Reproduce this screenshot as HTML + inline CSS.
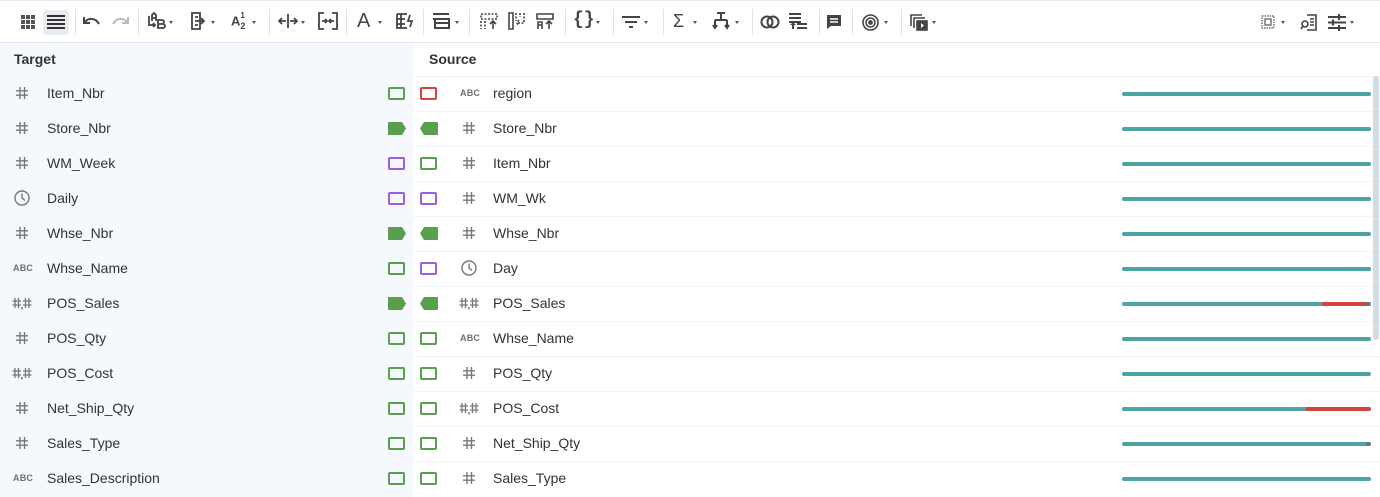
<!DOCTYPE html>
<html><head><meta charset="utf-8"><style>
*{margin:0;padding:0;box-sizing:border-box}
body{width:1380px;height:497px;overflow:hidden;background:#fff;font-family:"Liberation Sans",Arial,sans-serif;color:#333;position:relative}
.tb{position:absolute;left:0;top:0;width:1380px;height:43px;border-top:1px solid #e6eaf0;border-bottom:1px solid #e3e8ef;background:#fff}
.ic{position:absolute;top:11px}
.sep{position:absolute;top:8px;width:1px;height:26px;background:#dde2e8}
.dd{position:absolute;top:20px;width:0;height:0;border-left:2.5px solid transparent;border-right:2.5px solid transparent;border-top:3px solid #555}
.lp{position:absolute;left:0;top:43px;width:413px;height:454px;background:#f5f8fc}
.hdr{position:absolute;top:51px;font-size:14px;font-weight:bold;color:#333}
.row{position:absolute;left:413px;width:967px;height:35px;border-top:1px solid #f0f3f7}
.t{position:absolute;font-size:14px;color:#333;line-height:16px}
.ty{position:absolute}
.abc{position:absolute;font-size:9px;font-weight:bold;color:#6b6f76;letter-spacing:0.2px;line-height:10px}
.box{position:absolute;width:17px;height:13px;border:2px solid #5a9e4f;border-radius:2px}
.bar{position:absolute;left:1122px;width:249px;height:4px;border-radius:2px;background:#4ea3a5;overflow:hidden}
.bar i{position:absolute;top:0;height:4px}
</style></head><body>
<div class="tb">
<svg class="ic" style="left:20px;top:13px" width="16" height="16" viewBox="0 0 16 16" fill="#555"><rect x="1" y="1" width="4" height="4"/><rect x="6" y="1" width="4" height="4"/><rect x="11" y="1" width="4" height="4"/><rect x="1" y="6" width="4" height="4"/><rect x="6" y="6" width="4" height="4"/><rect x="11" y="6" width="4" height="4"/><rect x="1" y="11" width="4" height="4"/><rect x="6" y="11" width="4" height="4"/><rect x="11" y="11" width="4" height="4"/></svg>
<div style="position:absolute;left:43px;top:9px;width:26px;height:25px;background:#e8ecf1;border-radius:3px"></div>
<svg class="ic" style="left:47px;top:14px" width="18" height="14" viewBox="0 0 18 14" fill="#333"><rect y="0" width="18" height="2"/><rect y="4" width="18" height="2"/><rect y="8" width="18" height="2"/><rect y="12" width="18" height="2"/></svg>
<div class="sep" style="left:75px"></div>
<svg class="ic" style="left:83px;top:15px" width="18" height="12" viewBox="0 0 18 12" fill="none" stroke="#444" stroke-width="2"><path d="M2 6c3-4 10-5 14 2"/><path d="M1 1v6h6" stroke-width="2"/></svg>
<svg class="ic" style="left:111px;top:15px" width="18" height="12" viewBox="0 0 18 12" fill="none" stroke="#bbb" stroke-width="2"><path d="M16 6C13 2 6 1 2 8"/><path d="M17 1v6h-6"/></svg>
<div class="sep" style="left:138px"></div>
<svg class="ic" style="left:147px" width="20" height="18" viewBox="0 0 20 18" fill="none" stroke="#444" stroke-width="1.8"><path d="M2 4v9h6M6 11l2 2-2 2"/><path d="M5 9V3l2-2 2 2v6M5 6h4"/><path d="M11 8h4a2 2 0 010 4h-4zM11 12h5a2 2 0 010 4h-5z"/></svg>
<div class="dd" style="left:169px"></div>
<svg class="ic" style="left:190px" width="18" height="18" viewBox="0 0 18 18" fill="none" stroke="#444" stroke-width="1.8"><path d="M2 1h8v16H2zM5 5h3M5 9h9M11 6l3 3-3 3M5 13h3"/></svg>
<div class="dd" style="left:211px"></div>
<div class="ic" style="left:231px;top:12px;font-size:13px;font-weight:bold;color:#444">A<sub style="font-size:9px">2</sub><sup style="font-size:8px;position:relative;left:-5px;top:-2px">1</sup></div>
<div class="dd" style="left:252px"></div>
<div class="sep" style="left:269px"></div>
<svg class="ic" style="left:278px" width="20" height="18" viewBox="0 0 20 18" fill="none" stroke="#444" stroke-width="1.8"><path d="M10 2v14M1 9h7M12 9h7M4 6l-3 3 3 3M16 6l3 3-3 3"/></svg>
<div class="dd" style="left:301px"></div>
<svg class="ic" style="left:318px" width="20" height="18" viewBox="0 0 20 18" fill="none" stroke="#444" stroke-width="1.8"><path d="M6 1H1v16h5M14 1h5v16h-5M4 9h5M7 7l2 2-2 2M16 9h-5M13 7l-2 2 2 2"/></svg>
<div class="sep" style="left:346px"></div>
<div class="ic" style="left:357px;top:9px;font-size:20px;color:#444">A</div>
<div class="dd" style="left:378px"></div>
<svg class="ic" style="left:395px" width="20" height="18" viewBox="0 0 20 18" fill="none" stroke="#444" stroke-width="1.8"><path d="M2 2h10M2 2v14h10M2 7h8M2 12h8M6 2v14M15 3l-2 6h4l-2 6"/></svg>
<div class="sep" style="left:423px"></div>
<svg class="ic" style="left:432px" width="20" height="18" viewBox="0 0 20 18" fill="none" stroke="#444" stroke-width="2"><path d="M1 2h16M1 7h16v4H3M3 7v9h14v-5"/></svg>
<div class="dd" style="left:455px"></div>
<div class="sep" style="left:469px"></div>
<svg class="ic" style="left:480px" width="18" height="18" viewBox="0 0 18 18" fill="none" stroke="#444" stroke-width="1.6"><path d="M1 2h16v5H1zM1 9v8M5 9v8" stroke-dasharray="2 1.5"/><path d="M13 17V9M10 12l3-3 3 3"/></svg>
<svg class="ic" style="left:508px" width="18" height="18" viewBox="0 0 18 18" fill="none" stroke="#444" stroke-width="1.6"><path d="M1 1h4v16H1z"/><path d="M8 1v8M12 1v4M16 1v10h-7M11 8l-2 3 2 3" stroke-dasharray="2 1.5"/></svg>
<svg class="ic" style="left:536px" width="18" height="18" viewBox="0 0 18 18" fill="none" stroke="#444" stroke-width="1.6"><path d="M1 2h16v5H1zM2 17v-7h4v7M2 13h4M13 17V9M10 12l3-3 3 3"/></svg>
<div class="sep" style="left:565px"></div>
<div class="ic" style="left:573px;top:9px;font-size:18px;color:#444;font-family:'Liberation Mono',monospace;font-weight:bold">{}</div>
<div class="dd" style="left:596px"></div>
<div class="sep" style="left:613px"></div>
<svg class="ic" style="left:622px;top:15px" width="18" height="12" viewBox="0 0 18 12" fill="#444"><rect x="0" y="0" width="18" height="2"/><rect x="3" y="5" width="12" height="2"/><rect x="7" y="10" width="4" height="2"/></svg>
<div class="dd" style="left:644px"></div>
<div class="sep" style="left:663px"></div>
<div class="ic" style="left:673px;top:10px;font-size:18px;color:#444">Σ</div>
<div class="dd" style="left:693px"></div>
<svg class="ic" style="left:712px" width="18" height="18" viewBox="0 0 18 18" fill="none" stroke="#444" stroke-width="2"><path d="M5 1h8M9 1v7M3 8h12M3 8v8M15 8v8M1 13l2 3 2-3M13 13l2 3 2-3"/></svg>
<div class="dd" style="left:735px"></div>
<div class="sep" style="left:752px"></div>
<svg class="ic" style="left:760px;top:14px" width="20" height="14" viewBox="0 0 20 14" fill="none" stroke="#444" stroke-width="2"><circle cx="7" cy="7" r="5.5"/><circle cx="13" cy="7" r="5.5"/></svg>
<svg class="ic" style="left:789px" width="18" height="18" viewBox="0 0 18 18" fill="#444"><rect x="0" y="1" width="12" height="2"/><rect x="0" y="5" width="12" height="2"/><rect x="0" y="9" width="12" height="2"/><rect x="8" y="15" width="10" height="2"/><rect x="8" y="11" width="10" height="2"/><path d="M3 17v-4H1l3-3 3 3H5v4z"/></svg>
<div class="sep" style="left:819px"></div>
<svg class="ic" style="left:826px;top:13px" width="16" height="16" viewBox="0 0 16 16"><path d="M1 1h14v11H5l-4 3z" fill="#444"/><path d="M4 5h8M4 8h8" stroke="#fff" stroke-width="1.4"/></svg>
<div class="sep" style="left:852px"></div>
<svg class="ic" style="left:862px;top:13px" width="17" height="17" viewBox="0 0 17 17" fill="none" stroke="#444" stroke-width="1.6"><circle cx="8.5" cy="8.5" r="7.5"/><circle cx="8.5" cy="8.5" r="4.5"/><circle cx="8.5" cy="8.5" r="1.6" fill="#444"/></svg>
<div class="dd" style="left:884px"></div>
<div class="sep" style="left:901px"></div>
<svg class="ic" style="left:910px;top:13px" width="18" height="17" viewBox="0 0 18 17" fill="none" stroke="#444" stroke-width="1.6"><path d="M1 12V1h11M4 14V4h11"/><rect x="7" y="7" width="10" height="9" fill="#444"/><path d="M11 9l3 2.5-3 2.5z" fill="#fff" stroke="none"/></svg>
<div class="dd" style="left:932px"></div>
<svg class="ic" style="left:1261px;top:14px" width="14" height="14" viewBox="0 0 14 14" fill="none" stroke="#555" stroke-width="1.2"><rect x="1" y="1" width="12" height="12" stroke-dasharray="1.5 1"/><rect x="4" y="4" width="6" height="6"/></svg>
<div class="dd" style="left:1281px"></div>
<svg class="ic" style="left:1300px;top:13px" width="18" height="17" viewBox="0 0 18 17" fill="none" stroke="#444" stroke-width="1.6"><path d="M7 1h9v15H7M10 5h4M10 8h4M10 11h4"/><circle cx="5" cy="10" r="3"/><path d="M3 12l-2 3"/></svg>
<svg class="ic" style="left:1327px;top:13px" width="20" height="17" viewBox="0 0 20 17" fill="none" stroke="#444" stroke-width="2"><path d="M1 3h18M1 8.5h18M1 14h18"/><path d="M12 0v6M6 5.5v6M12 11v6" stroke-width="2.2"/></svg>
<div class="dd" style="left:1350px"></div>
</div>

<div class="lp"></div>
<div class="hdr" style="left:14px">Target</div>
<div class="hdr" style="left:429px">Source</div>
<div id="rows"></div>
<div style="position:absolute;left:1373px;top:76px;width:6px;height:264px;background:#d3dbe5;border-radius:3px"></div>
<script>
(function(){
var H='<svg width="14" height="14" viewBox="0 0 14 14" fill="none" stroke="#74787e" stroke-width="1.4"><path d="M5 1v12M9.5 1v12M1 4.8h12M1 9.2h12"/></svg>';
var HH='<svg width="20" height="14" viewBox="0 0 20 14" fill="none" stroke="#74787e" stroke-width="1.3"><path d="M3 2v10M6.5 2v10M0.5 5h8.5M0.5 9h8.5M13.5 2v10M17 2v10M11 5h8.5M11 9h8.5"/><path d="M10 11v2.5" stroke-width="1.5"/></svg>';
var C='<svg width="16" height="16" viewBox="0 0 16 16" fill="none" stroke="#74787e" stroke-width="1.4"><circle cx="8" cy="8" r="7"/><path d="M8 3.5V8l3 2.5"/></svg>';
function ty(t,x,y){
 if(t=='a') return '<div class="abc" style="left:'+(x-9)+'px;top:'+(y-5)+'px">ABC</div>';
 if(t=='h') return '<div class="ty" style="left:'+(x-7)+'px;top:'+(y-7)+'px">'+H+'</div>';
 if(t=='d') return '<div class="ty" style="left:'+(x-10)+'px;top:'+(y-7)+'px">'+HH+'</div>';
 return '<div class="ty" style="left:'+(x-8)+'px;top:'+(y-8)+'px">'+C+'</div>';
}
var col={g:'#5a9e4f',p:'#9b5de5',r:'#d9433a'};
function bx(k,x,y,dir){
 if(k=='f'){
  var p=dir?'M1 0h13l4 6.5-4 6.5H1a1 1 0 01-1-1V1a1 1 0 011-1z':'M4 0h13a1 1 0 011 1v11a1 1 0 01-1 1H4L0 6.5z';
  return '<svg style="position:absolute;left:'+x+'px;top:'+(y-6)+'px" width="18" height="13" viewBox="0 0 18 13"><path d="'+p+'" fill="#5a9e4f"/></svg>';
 }
 return '<div class="box" style="left:'+x+'px;top:'+(y-6)+'px;border-color:'+col[k]+'"></div>';
}
var L=[['h','Item_Nbr','g'],['h','Store_Nbr','f'],['h','WM_Week','p'],['c','Daily','p'],['h','Whse_Nbr','f'],['a','Whse_Name','g'],['d','POS_Sales','f'],['h','POS_Qty','g'],['d','POS_Cost','g'],['h','Net_Ship_Qty','g'],['h','Sales_Type','g'],['a','Sales_Description','g']];
var R=[['a','region','r'],['h','Store_Nbr','f'],['h','Item_Nbr','g'],['h','WM_Wk','p'],['h','Whse_Nbr','f'],['c','Day','p'],['d','POS_Sales','f'],['a','Whse_Name','g'],['h','POS_Qty','g'],['d','POS_Cost','g'],['h','Net_Ship_Qty','g'],['h','Sales_Type','g']];
var s='';
for(var i=0;i<12;i++){
 var tp=76+i*35, y=tp+17;
 s+='<div class="row" style="top:'+tp+'px"></div>';
 s+=ty(L[i][0],22,y)+'<div class="t" style="left:47px;top:'+(y-8)+'px">'+L[i][1]+'</div>';
 s+=bx(L[i][2],388,y,1)+bx(R[i][2],420,y,0);
 s+=ty(R[i][0],469,y)+'<div class="t" style="left:493px;top:'+(y-8)+'px">'+R[i][1]+'</div>';
 var seg='';
 if(i==6) seg='<i style="left:200px;width:44px;background:#d2453c"></i><i style="left:244px;width:5px;background:#6c757d"></i>';
 if(i==9) seg='<i style="left:184px;width:65px;background:#d2453c"></i>';
 if(i==10) seg='<i style="left:244px;width:5px;background:#6c757d"></i>';
 s+='<div class="bar" style="top:'+(y-1)+'px">'+seg+'</div>';
}
document.getElementById('rows').innerHTML=s;
})();
</script>
</body></html>
